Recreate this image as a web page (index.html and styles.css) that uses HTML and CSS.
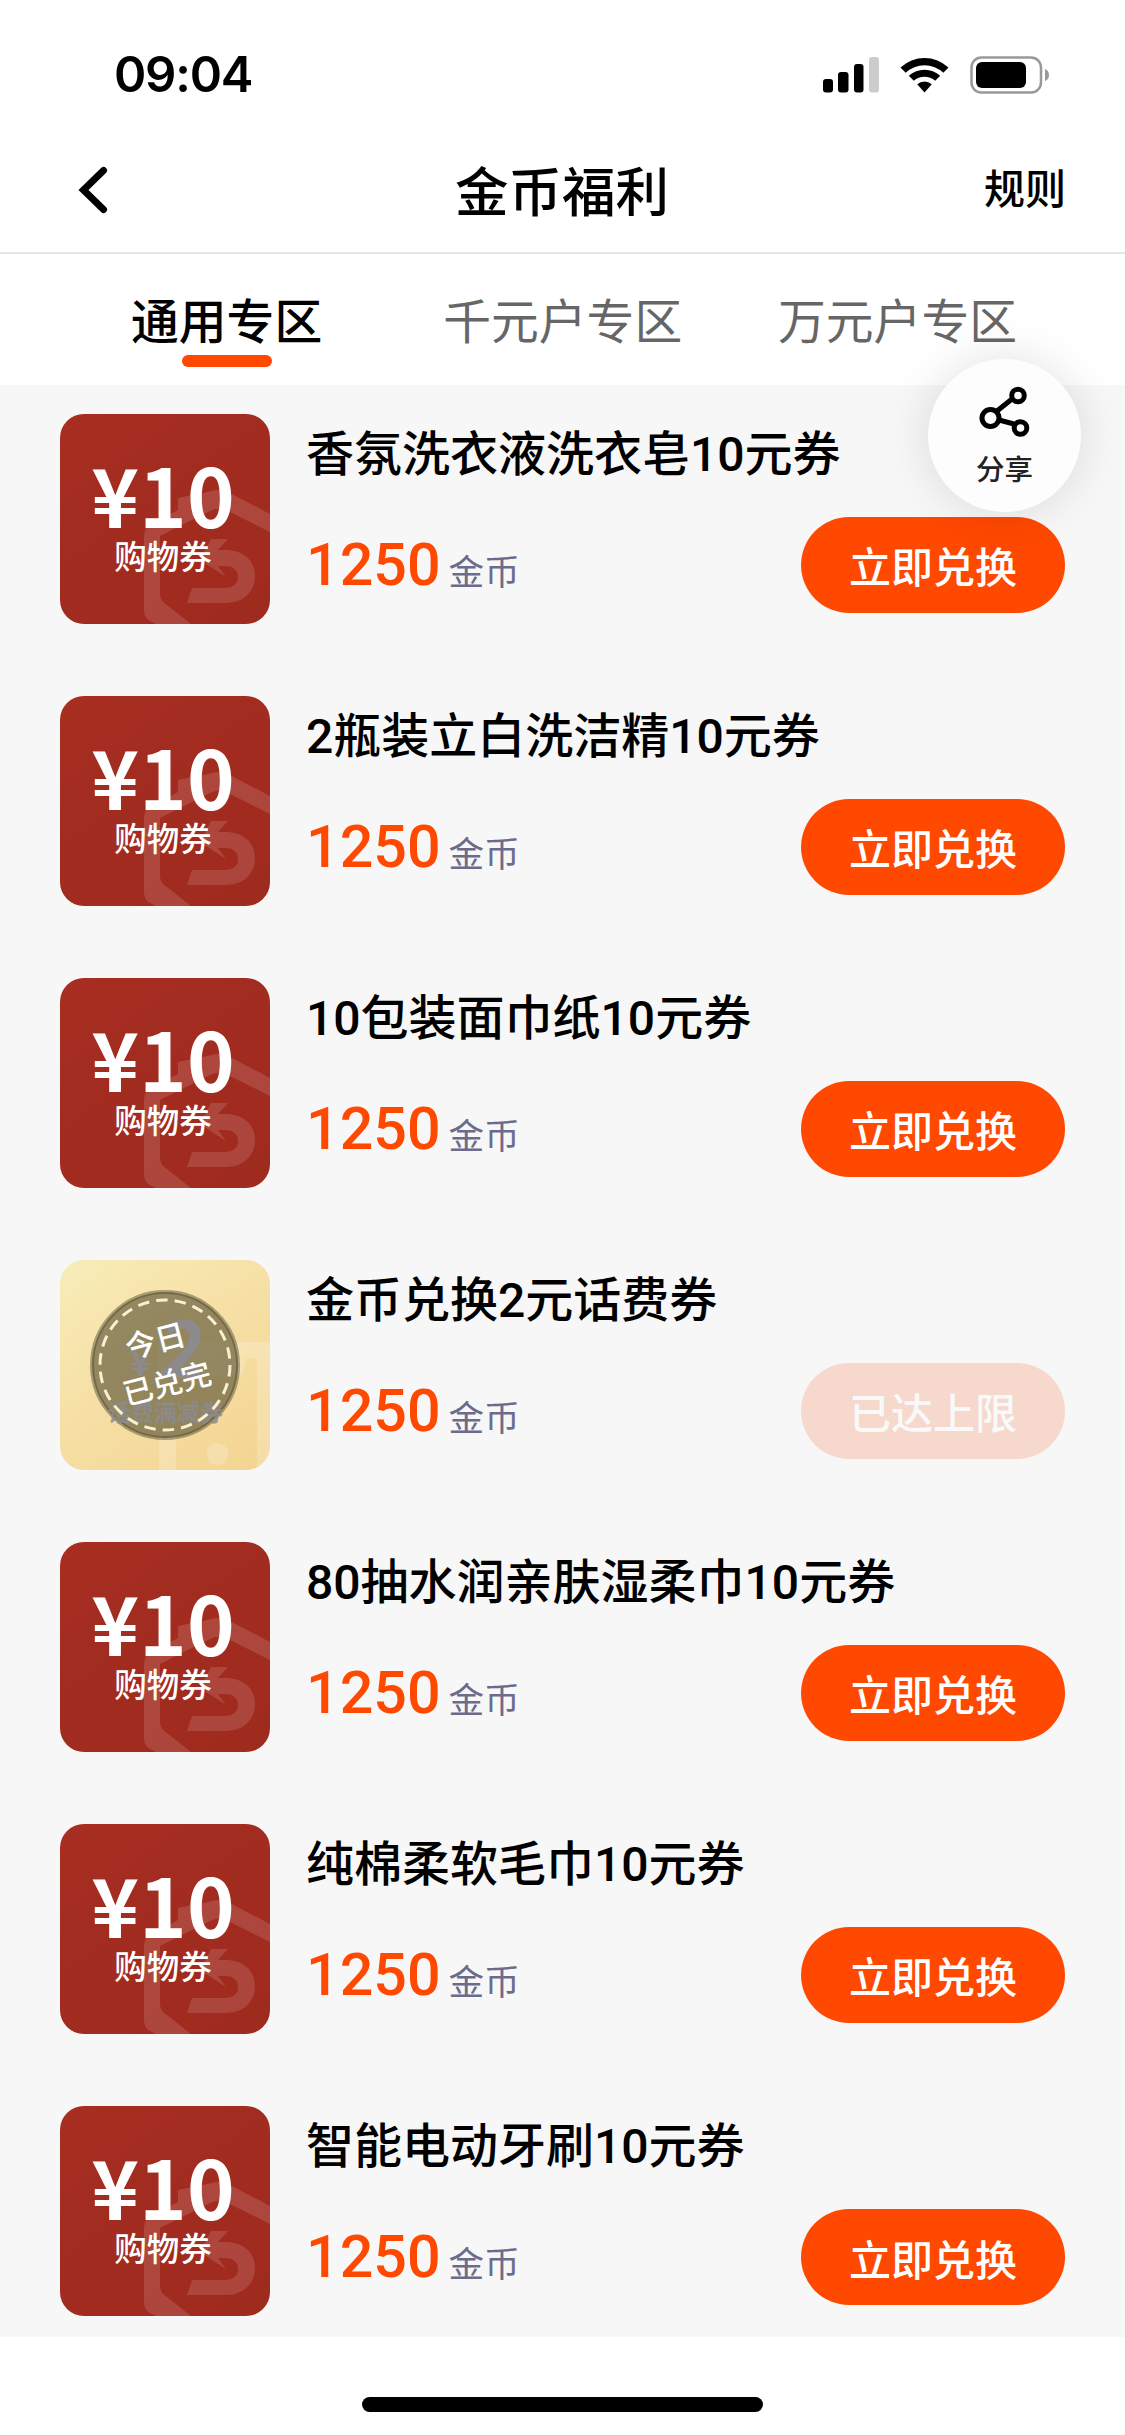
FILE: index.html
```html
<!DOCTYPE html>
<html lang="zh-CN">
<head>
<meta charset="utf-8">
<title>金币福利</title>
<link rel="stylesheet" href="styles.css">
</head>
<body>
<svg class="defs" width="0" height="0" aria-hidden="true">
  <symbol id="mark" viewBox="0 0 210 210">
    <g fill="#fff" fill-opacity=".13">
      <path d="M118 84L152 77Q160 74 170 79L210 100V118L166 96Q158 93 150 97L100 122V180Q100 187 107 191L131 210H96L88 206Q84 202 84 196V122Q84 114 92 109L118 96Z"/>
      <path d="M151 125H168L158 136H165C183 136 195 146 195 162C195 178 183 189 166 189H127L132 174H164C173 174 178 170 178 163C178 156 173 152 166 152H158L166 163L140 146Z"/>
    </g>
  </symbol>
</svg>
<div class="status">
  <span class="time">09:04</span>
  <svg class="status-icons" width="228" height="38" viewBox="0 0 228 38">
    <rect x="0" y="22" width="10" height="13.500" rx="3"/>
    <rect x="15" y="15" width="10.500" height="20.500" rx="3"/>
    <rect x="31" y="7" width="9.500" height="28.500" rx="3"/>
    <rect x="46" y="0" width="10" height="35.500" rx="3" fill="#ccc"/>
    <path d="M77.500 10.500a35 35 0 0 1 48 0l-5.200 5.200a27.500 27.500 0 0 0-37.600 0z"/>
    <path d="M85.800 18.800a23.200 23.200 0 0 1 31.400 0l-5 5a16 16 0 0 0-21.400 0z"/>
    <path d="M94.200 27.300a11.200 11.200 0 0 1 14.600 0l-7.300 8.200z"/>
    <rect x="148.500" y="0.500" width="69.500" height="35" rx="10" fill="none" stroke="#999" stroke-width="2.500"/>
    <rect x="153" y="5" width="50" height="26" rx="6"/>
    <path d="M222 12q4 1.500 4 6t-4 6z" fill="#999"/>
  </svg>
</div>
<header class="nav">
  <svg class="back" width="36" height="50" viewBox="0 0 36 50"><path d="M29.500 5.500L9.500 25L29.500 44.500" fill="none" stroke="#000" stroke-width="7" stroke-linecap="round" stroke-linejoin="miter"/></svg>
  <h1>金币福利</h1>
  <span class="rules">规则</span>
</header>
<nav class="tabs">
  <span class="tab active">通用专区</span>
  <span class="tab">千元户专区</span>
  <span class="tab">万元户专区</span>
</nav>
<main class="list">
  <article class="item">
    <div class="thumb"><svg class="art"><use href="#mark"/></svg><b>¥10</b><span>购物券</span></div>
    <div class="info"><h2>香氛洗衣液洗衣皂10元券</h2><p><b>1250</b><span>金币</span></p></div>
    <button>立即兑换</button>
  </article>
  <article class="item">
    <div class="thumb"><svg class="art"><use href="#mark"/></svg><b>¥10</b><span>购物券</span></div>
    <div class="info"><h2>2瓶装立白洗洁精10元券</h2><p><b>1250</b><span>金币</span></p></div>
    <button>立即兑换</button>
  </article>
  <article class="item">
    <div class="thumb"><svg class="art"><use href="#mark"/></svg><b>¥10</b><span>购物券</span></div>
    <div class="info"><h2>10包装面巾纸10元券</h2><p><b>1250</b><span>金币</span></p></div>
    <button>立即兑换</button>
  </article>
  <article class="item">
    <div class="thumb gold">
      <svg class="art" viewBox="0 0 210 210">
        <g fill="#fff" fill-opacity=".2"><path d="M98 82H210V98H187L182 115H98Z"/><path d="M197 98H210V210H197Z"/><path d="M99 175H116V210H99Z"/><circle cx="157.500" cy="194" r="11"/></g>
        <circle cx="105" cy="105" r="73" fill="#5d5638" fill-opacity=".65" stroke="#4b452e" stroke-opacity=".45" stroke-width="4"/>
        <g class="phone" fill="#8b8b94" fill-opacity=".85"><text x="70" y="116" font-size="36">¥</text><text x="0" y="0" font-size="78" transform="translate(97 118) skewX(-6)">2</text><text x="48" y="161" font-size="23">话费满减券</text></g>
        <circle cx="105" cy="105" r="65" fill="none" stroke="#faf0cf" stroke-width="3" stroke-dasharray="11.500 7.060"/>
        <g class="stamp" fill="#fff" text-anchor="middle"><text y="11" font-size="30.500" transform="translate(95.500 81) rotate(-14.500)">今日</text><text y="11" font-size="30" transform="translate(107 123.500) rotate(-14.500)">已兑完</text></g>
      </svg>
    </div>
    <div class="info"><h2>金币兑换2元话费券</h2><p><b>1250</b><span>金币</span></p></div>
    <button disabled>已达上限</button>
  </article>
  <article class="item">
    <div class="thumb"><svg class="art"><use href="#mark"/></svg><b>¥10</b><span>购物券</span></div>
    <div class="info"><h2>80抽水润亲肤湿柔巾10元券</h2><p><b>1250</b><span>金币</span></p></div>
    <button>立即兑换</button>
  </article>
  <article class="item">
    <div class="thumb"><svg class="art"><use href="#mark"/></svg><b>¥10</b><span>购物券</span></div>
    <div class="info"><h2>纯棉柔软毛巾10元券</h2><p><b>1250</b><span>金币</span></p></div>
    <button>立即兑换</button>
  </article>
  <article class="item">
    <div class="thumb"><svg class="art"><use href="#mark"/></svg><b>¥10</b><span>购物券</span></div>
    <div class="info"><h2>智能电动牙刷10元券</h2><p><b>1250</b><span>金币</span></p></div>
    <button>立即兑换</button>
  </article>
</main>
<footer class="home"><div class="home-bar"></div></footer>
<div class="share">
  <svg width="52" height="52" viewBox="0 0 52 52" fill="none" stroke="#000" stroke-width="5"><path d="M19 25L34 13M21 34L36 38"/><circle cx="12.500" cy="32" r="8.500"/><circle cx="40" cy="9.500" r="6.300"/><circle cx="42.500" cy="42" r="6.300"/></svg>
  <span>分享</span>
</div>
</body>
</html>
```
FILE: styles.css
```css
* { box-sizing: border-box; margin: 0; padding: 0; }
body {
  width: 1125px;
  height: 2435px;
  position: relative;
  background: #fff;
  color: #000;
  font-family: Roboto, "Noto Sans CJK SC", sans-serif;
  display: flex;
  flex-direction: column;
  overflow: hidden;
}
.defs { position: absolute; }
.status {
  height: 138px;
  display: flex;
  justify-content: space-between;
  padding: 46px 74px 0 114px;
}
.time { font: 600 49px/58px Inter, sans-serif; letter-spacing: -1.200px; }
.status-icons { margin-top: 11px; overflow: visible; }
.nav {
  height: 116px;
  border-bottom: 2px solid #e5e5e5;
  display: grid;
  grid-template-columns: 1fr auto 1fr;
  align-items: center;
  padding: 0 59px 10px 74px;
}
.nav h1 { font-size: 53.500px; font-weight: 500; line-height: 80px; padding-top: 7px; margin-right: 16px; }
.rules { justify-self: end; font-size: 41px; font-weight: 500; line-height: 60px; }
.tabs {
  height: 131px;
  display: flex;
  padding: 0 108px 0 131px;
}
.tab {
  font-size: 47.800px;
  line-height: 70px;
  padding-top: 34px;
  color: #666;
}
.tab:nth-child(2) { margin-left: 121px; margin-right: auto; }
.tab.active {
  color: #000;
  font-weight: 500;
  display: flex;
  flex-direction: column;
  align-items: center;
}
.tab.active::after {
  content: "";
  width: 90px;
  height: 12px;
  margin-top: -3px;
  border-radius: 6px;
  background: #ff4800;
}
.list {
  height: 1952px;
  background: #f7f7f7;
  padding: 28.600px 60px 0;
  display: flex;
  flex-direction: column;
  gap: 72.080px;
}
.item { display: flex; height: 210px; flex: none; }
.thumb {
  width: 210px;
  height: 210px;
  flex: none;
  border-radius: 24px;
  overflow: hidden;
  position: relative;
  background: linear-gradient(145deg, #a72e21, #a32c20 35%, #9f2a1e);
  color: #fff;
  font-family: "Noto Sans CJK SC", sans-serif;
  display: flex;
  flex-direction: column;
  align-items: center;
  padding-top: 37px;
}
.thumb b { font-size: 81px; font-weight: 700; line-height: 84px; padding-right: 4px; position: relative; }
.thumb span { font-size: 32.500px; font-weight: 500; line-height: 40px; padding-right: 4px; position: relative; }
.thumb.gold { background: linear-gradient(145deg, #f8edb8, #f6e0a6 45%, #f3d491); padding: 0; }
.art { position: absolute; inset: 0; width: 210px; height: 210px; }
.phone { font-weight: 700; }
.stamp { font-weight: 500; }
.info { flex: 1; min-width: 0; padding-left: 36px; }
.info h2 { font-size: 48px; font-weight: 500; line-height: 72px; margin-top: 5px; white-space: nowrap; }
.info p { display: flex; align-items: baseline; line-height: 72px; margin-top: 38px; }
.info p b { font-size: 59.200px; font-weight: 500; color: #ff4800; }
.info p span { font-size: 35.600px; color: #6b6c8b; margin-left: 8px; }
.item button {
  flex: none;
  width: 264px;
  height: 96px;
  margin-top: 103px;
  border: 0;
  border-radius: 48px;
  background: #ff4800;
  color: #fff;
  font: 500 42px/60px "Noto Sans CJK SC", sans-serif;
  padding-top: 1px;
}
.item button:disabled { background: #f6d8cc; color: #f9f9f9; }
.home { flex: 1; display: flex; justify-content: center; padding-top: 60px; }
.home-bar { width: 401px; height: 15px; border-radius: 8px; background: #000; }
.share {
  position: absolute;
  left: 928px;
  top: 359px;
  width: 153px;
  height: 153px;
  border-radius: 50%;
  background: #fdfdfd;
  box-shadow: 0 0 48px rgba(0, 0, 0, .12);
  display: flex;
  flex-direction: column;
  align-items: center;
  padding-top: 27px;
}
.share svg { margin-right: 2px; }
.share span { font-size: 28.500px; font-weight: 500; line-height: 40px; margin-top: 13px; color: #222; }
```
